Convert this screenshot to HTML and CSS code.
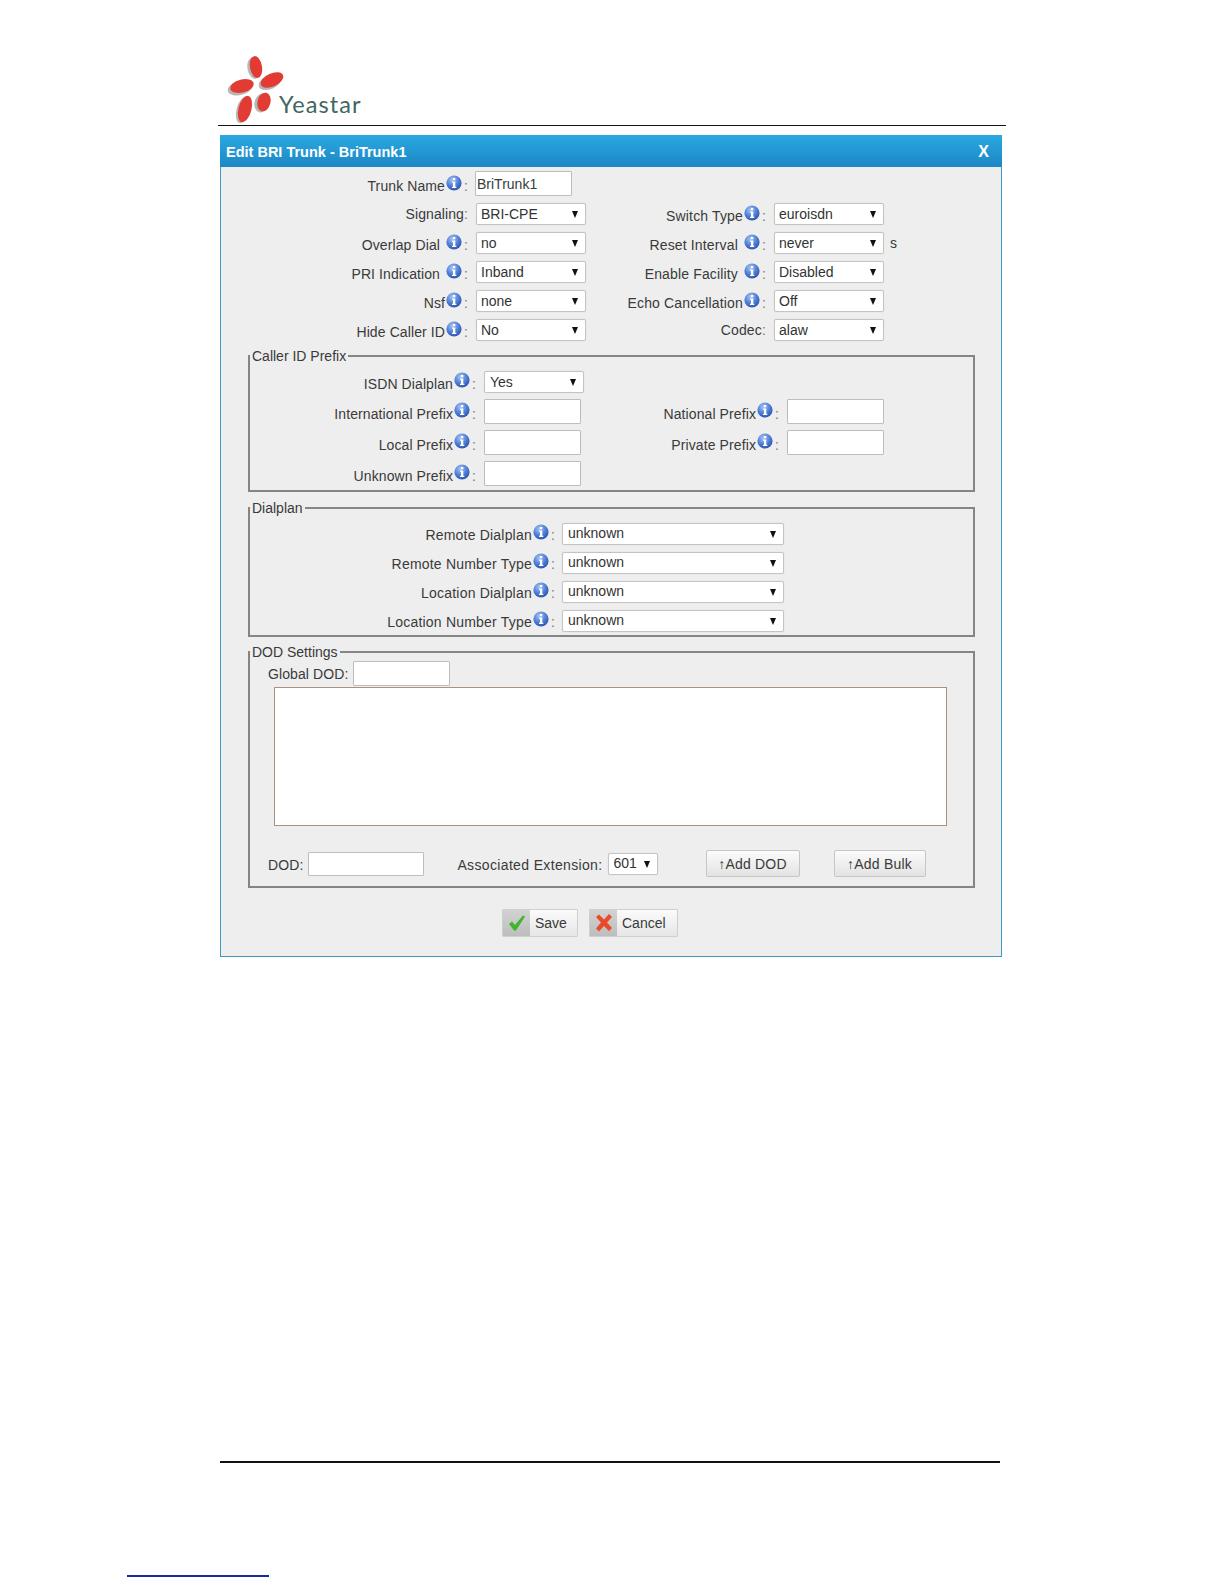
FILE: index.html
```html
<!DOCTYPE html>
<html>
<head>
<meta charset="utf-8">
<title>Edit BRI Trunk</title>
<link rel="stylesheet" href="styles.css">
</head>
<body>
<svg width="0" height="0" class="defs">
  <defs>
    <radialGradient id="ig" cx="40%" cy="30%" r="75%">
      <stop offset="0" stop-color="#a9c6f2"/>
      <stop offset=".55" stop-color="#4f7fd6"/>
      <stop offset="1" stop-color="#2a50ac"/>
    </radialGradient>
    <symbol id="info" viewBox="0 0 16 16">
      <circle cx="8" cy="8" r="7.6" fill="url(#ig)"/>
      <rect x="6.9" y="3" width="2.4" height="2.2" fill="#fff"/>
      <path d="M6 6.5h3.3v5.2h1v1.3H6v-1.3h1V7.8H6z" fill="#fff"/>
    </symbol>
  </defs>
</svg>
<div class="page">
  <header class="logo">
    <svg class="mark" width="64" height="76" viewBox="0 0 64 76">
      <g fill="#9a9a9a" opacity=".7">
        <ellipse cx="28" cy="14" rx="6.500" ry="11" transform="rotate(-10 28 14)"/>
        <ellipse cx="44" cy="28" rx="12" ry="7" transform="rotate(-24 44 28)"/>
        <ellipse cx="14" cy="34" rx="12.500" ry="7" transform="rotate(-14 14 34)"/>
        <ellipse cx="17" cy="56" rx="6.500" ry="13.500" transform="rotate(14 17 56)"/>
        <ellipse cx="35.500" cy="49" rx="7" ry="9.500" transform="rotate(14 35.500 49)"/>
      </g>
      <g fill="#e23b34">
        <ellipse cx="30" cy="13" rx="6" ry="11" transform="rotate(-10 30 13)"/>
        <ellipse cx="46" cy="26" rx="12" ry="6.500" transform="rotate(-24 46 26)"/>
        <ellipse cx="16" cy="32" rx="12" ry="6.500" transform="rotate(-14 16 32)"/>
        <ellipse cx="19" cy="55" rx="6.500" ry="13.500" transform="rotate(14 19 55)"/>
        <ellipse cx="38" cy="48" rx="6.500" ry="9.500" transform="rotate(14 38 48)"/>
      </g>
    </svg>
    <span class="brand">Yeastar</span>
  </header>

  <main class="dialog">
    <div class="titlebar"><span>Edit BRI Trunk - BriTrunk1</span><span class="close">X</span></div>
    <div class="body">
      <div class="top">
        <div class="row row-first">
          <label class="lab lab-l">Trunk Name<svg class="ic"><use href="#info"/></svg><i>:</i></label>
          <input class="inp inp-name" type="text" value="BriTrunk1">
        </div>
        <div class="row">
          <label class="lab lab-l lab-n">Signaling<i>:</i></label>
          <div class="sel sel-m"><span>BRI-CPE</span></div>
          <label class="lab lab-r">Switch Type<svg class="ic"><use href="#info"/></svg><i>:</i></label>
          <div class="sel sel-m"><span>euroisdn</span></div>
        </div>
        <div class="row">
          <label class="lab lab-l">Overlap Dial<svg class="ic ic-gap"><use href="#info"/></svg><i>:</i></label>
          <div class="sel sel-m"><span>no</span></div>
          <label class="lab lab-r">Reset Interval<svg class="ic ic-gap"><use href="#info"/></svg><i>:</i></label>
          <div class="sel sel-m"><span>never</span></div>
          <span class="unit">s</span>
        </div>
        <div class="row">
          <label class="lab lab-l">PRI Indication<svg class="ic ic-gap"><use href="#info"/></svg><i>:</i></label>
          <div class="sel sel-m"><span>Inband</span></div>
          <label class="lab lab-r">Enable Facility<svg class="ic ic-gap"><use href="#info"/></svg><i>:</i></label>
          <div class="sel sel-m"><span>Disabled</span></div>
        </div>
        <div class="row">
          <label class="lab lab-l">Nsf<svg class="ic"><use href="#info"/></svg><i>:</i></label>
          <div class="sel sel-m"><span>none</span></div>
          <label class="lab lab-r">Echo Cancellation<svg class="ic"><use href="#info"/></svg><i>:</i></label>
          <div class="sel sel-m"><span>Off</span></div>
        </div>
        <div class="row">
          <label class="lab lab-l">Hide Caller ID<svg class="ic"><use href="#info"/></svg><i>:</i></label>
          <div class="sel sel-m"><span>No</span></div>
          <label class="lab lab-r lab-n">Codec<i>:</i></label>
          <div class="sel sel-m"><span>alaw</span></div>
        </div>
      </div>

      <fieldset class="box box-caller">
        <legend>Caller ID Prefix</legend>
        <div class="prow prow-sel">
          <label class="lab lab-c">ISDN Dialplan<svg class="ic"><use href="#info"/></svg><i>:</i></label>
          <div class="sel sel-y"><span>Yes</span></div>
        </div>
        <div class="prow">
          <label class="lab lab-c">International Prefix<svg class="ic"><use href="#info"/></svg><i>:</i></label>
          <input class="inp inp-p" type="text">
          <label class="lab lab-cr">National Prefix<svg class="ic"><use href="#info"/></svg><i>:</i></label>
          <input class="inp inp-p" type="text">
        </div>
        <div class="prow">
          <label class="lab lab-c">Local Prefix<svg class="ic"><use href="#info"/></svg><i>:</i></label>
          <input class="inp inp-p" type="text">
          <label class="lab lab-cr">Private Prefix<svg class="ic"><use href="#info"/></svg><i>:</i></label>
          <input class="inp inp-p" type="text">
        </div>
        <div class="prow">
          <label class="lab lab-c">Unknown Prefix<svg class="ic"><use href="#info"/></svg><i>:</i></label>
          <input class="inp inp-p" type="text">
        </div>
      </fieldset>

      <fieldset class="box box-dial">
        <legend>Dialplan</legend>
        <div class="row">
          <label class="lab lab-d">Remote Dialplan<svg class="ic"><use href="#info"/></svg><i>:</i></label>
          <div class="sel sel-l"><span>unknown</span></div>
        </div>
        <div class="row">
          <label class="lab lab-d">Remote Number Type<svg class="ic"><use href="#info"/></svg><i>:</i></label>
          <div class="sel sel-l"><span>unknown</span></div>
        </div>
        <div class="row">
          <label class="lab lab-d">Location Dialplan<svg class="ic"><use href="#info"/></svg><i>:</i></label>
          <div class="sel sel-l"><span>unknown</span></div>
        </div>
        <div class="row">
          <label class="lab lab-d">Location Number Type<svg class="ic"><use href="#info"/></svg><i>:</i></label>
          <div class="sel sel-l"><span>unknown</span></div>
        </div>
      </fieldset>

      <fieldset class="box box-dod">
        <legend>DOD Settings</legend>
        <div class="global">
          <label class="plain">Global DOD:</label>
          <input class="inp inp-p" type="text">
        </div>
        <div class="listbox"></div>
        <div class="dodrow">
          <label class="plain">DOD:</label>
          <input class="inp inp-dod" type="text">
          <label class="plain assoc">Associated Extension:</label>
          <div class="sel sel-s"><span>601</span></div>
          <button class="btn btn-add" type="button">↑Add DOD</button>
          <button class="btn btn-bulk" type="button">↑Add Bulk</button>
        </div>
      </fieldset>

      <div class="actions">
        <button class="act act-save" type="button">
          <span class="act-ic"><svg width="18" height="18" viewBox="0 0 18 18"><path d="M1 10l3-2.500 3 3.500L15 1.500l2 1L8 16.500H6z" fill="#3fb52c"/></svg></span>
          <span class="act-t">Save</span>
        </button>
        <button class="act act-cancel" type="button">
          <span class="act-ic"><svg width="20" height="20" viewBox="0 0 20 20"><path d="M2 4l3-2.500 5 5 5-5.500 3 3-5 5.500 5 5.500-3 3-5-5-5 5.500-3-3 5-6z" fill="#ea4a2a"/></svg></span>
          <span class="act-t">Cancel</span>
        </button>
      </div>
    </div>
  </main>

  <div class="footline"></div>
</div>
<div class="noteline"></div>
</body>
</html>
```
FILE: styles.css
```css
* { box-sizing: border-box; }
html, body { margin: 0; padding: 0; background: #fff; }
body { font-family: "Liberation Sans", Arial, sans-serif; font-size: 14px; color: #3a3a3a; height: 1584px; overflow: hidden; }
.defs { display: block; height: 0; }
.page { margin-left: 218px; width: 788px; }

.logo { height: 126px; border-bottom: 1.500px solid #111; display: flex; position: relative; }
.mark { margin: 54px 0 0 8px; }
.brand { position: absolute; left: 61px; top: 90px; font-family: "Lato", sans-serif; font-size: 23.500px; letter-spacing: 1.100px; color: #41675f; }

.dialog { margin: 9px 0 0 2px; width: 782px; height: 822px; background: #eee; border: 1px solid #3f97c4; border-top: 0; }
.titlebar { height: 32px; margin: 0 -1px; padding: 2px 13px 0 6px; display: flex; justify-content: space-between; align-items: center; font-size: 14.500px; font-weight: bold; color: #fff; background: linear-gradient(#2aa9e0, #1c87c5); }
.close { font-size: 16px; }

.top { padding-top: 4px; }
.row { display: flex; align-items: flex-start; height: 29px; }
.row-first { height: 32px; }
.lab { display: flex; justify-content: flex-end; align-items: flex-start; flex: none; padding-top: 5px; line-height: 16px; letter-spacing: .1px; white-space: nowrap; }
.lab i { font-style: normal; margin: 0 2px; color: #777; }
.ic { width: 16px; height: 16px; margin: -3px 0 0 1px; flex: none; }
.ic-gap { margin-left: 6px; }
.row-first .lab { padding-top: 7px; }
.lab-n { padding-top: 3px; }
.lab-n i { margin-left: 0; }
.lab-l { width: 249px; margin-right: 6px; }
.lab-r { width: 182px; margin-right: 6px; letter-spacing: .15px; }
.lab-c { width: 228px; margin-right: 6px; }
.lab-cr { width: 200px; margin-right: 6px; }
.lab-d { width: 307px; margin-right: 5px; padding-top: 4px; letter-spacing: .2px; }

.inp { display: block; height: 25px; background: #fff; border: 1px solid #bdbdbd; border-radius: 1px; font: 14px "Liberation Sans", Arial, sans-serif; color: #3a3a3a; padding: 0 1px; flex: none; }
.inp-name { width: 97px; margin-left: -1px; height: 25px; }
.inp-p { width: 97px; }
.inp-dod { width: 116px; }

.sel { position: relative; height: 22px; background: #fff; border: 1px solid #c4c4c4; border-radius: 2px; box-shadow: 0 0 1px #ccc; padding-left: 5px; line-height: 21px; flex: none; color: #333; }
.sel::after { content: ""; position: absolute; right: 7px; top: 7px; border-left: 3.500px solid transparent; border-right: 3.500px solid transparent; border-top: 7px solid #111; }
.sel-m { width: 110px; padding-left: 4px; }
.sel-y { width: 100px; }
.sel-l { width: 222px; line-height: 19px; }
.sel-s { width: 50px; line-height: 19px; }
.unit { margin: 3px 0 0 6px; }

.box { display: block; min-width: 0; margin: 0 0 0 27px; padding: 0; border: 2px solid #858585; border-radius: 0; }
.box legend { padding: 0 2px; margin-left: 0; line-height: 16px; }
.box-caller { width: 727px; height: 144px; padding-top: 3px; }
.box-dial { width: 727px; height: 137px; margin-top: 8px; padding-top: 7px; }
.box-dod { width: 727px; height: 244px; margin-top: 7px; }
.prow { display: flex; align-items: flex-start; height: 31px; }
.prow-sel { height: 32px; padding-top: 4px; }
.prow .lab { padding-top: 7px; }
.prow-sel .lab { margin-top: -4px; padding-top: 9px; }
.prow .ic { margin-top: -4px; }

.global { display: flex; align-items: center; height: 25px; margin: 1px 0 1px 18px; gap: 5px; }
.plain { color: #3a3a3a; letter-spacing: .1px; white-space: nowrap; }
.listbox { width: 673px; height: 139px; margin: 0 0 0 24px; background: #fff; border: 1.500px solid #a8927f; }
.dodrow { display: flex; align-items: center; height: 27px; margin: 24px 0 0 18px; }
.dodrow .inp-dod { margin-left: 5px; height: 24px; }
.dodrow .plain { padding-top: 2px; }
.assoc { margin-left: 33px; margin-right: 5px; letter-spacing: .35px; }
.dodrow .sel-s { margin-top: 1px; }
.btn { height: 27px; padding: 0; background: linear-gradient(#fbfbfb, #e3e3e3); border: 1px solid #c6c6c6; border-radius: 2px; font: 14px "Liberation Sans", Arial, sans-serif; letter-spacing: .2px; color: #3a3a3a; flex: none; }
.btn-add { width: 94px; margin-left: 48px; }
.btn-bulk { width: 92px; margin-left: 34px; }

.actions { display: flex; margin: 21px 0 0 281px; gap: 11px; }
.act { display: flex; align-items: stretch; height: 28px; padding: 0; background: linear-gradient(#fbfbfb, #e6e6e6); border: 1px solid #cfcfcf; border-radius: 1px; font: 14px "Liberation Sans", Arial, sans-serif; color: #3a3a3a; }
.act-save { width: 76px; }
.act-cancel { width: 89px; }
.act-ic { width: 27px; flex: none; display: flex; align-items: center; justify-content: center; background: linear-gradient(#d2d2d2, #bdbdbd); }
.act-t { padding-left: 5px; line-height: 26px; }

.footline { margin: 504px 0 0 2px; width: 780px; height: 2px; background: #111; }
.noteline { margin: 112px 0 0 127px; width: 142px; height: 2px; background: #1a2a9a; }
```
